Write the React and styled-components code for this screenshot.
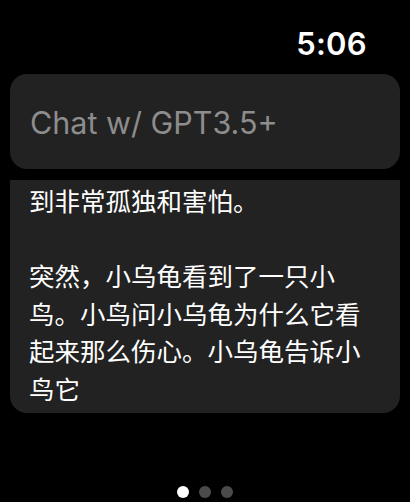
import React from "react";
import styled, { createGlobalStyle } from "styled-components";

const GlobalStyle = createGlobalStyle`
  html, body {
    margin: 0;
    padding: 0;
    background: #000;
  }
  body {
    font-family: Inter, "Noto Sans CJK SC", sans-serif;
  }
`;

const Screen = styled.div`
  width: 410px;
  height: 502px;
  background: #000;
  display: flex;
  flex-direction: column;
  overflow: hidden;
`;

const StatusBar = styled.div`
  height: 74px;
  display: flex;
  justify-content: flex-end;
  align-items: flex-start;
  padding-right: 43px;
  box-sizing: border-box;
`;

const Clock = styled.div`
  color: #fff;
  font-size: 31px;
  font-weight: 600;
  line-height: 30px;
  margin-top: 29px;
  letter-spacing: 0.3px;
`;

const InputCard = styled.div`
  margin: 0 10px;
  height: 95px;
  border-radius: 17px;
  background: #222222;
  display: flex;
  align-items: center;
  padding-left: 20px;
  box-sizing: border-box;
`;

const Placeholder = styled.span`
  color: #8d8d8d;
  font-size: 30.5px;
  font-weight: 400;
  margin-top: 1px;
`;

const Viewport = styled.div`
  margin-top: 11px;
  overflow: hidden;
`;

const MessageCard = styled.div`
  margin: 0 10px;
  background: #222222;
  border-radius: 0 0 17px 17px;
  padding: 1px 20px 7px 19px;
`;

const MessageText = styled.p`
  margin: 0;
  color: #fff;
  font-family: "Noto Sans CJK SC", sans-serif;
  font-size: 25.5px;
  line-height: 37.5px;
  white-space: pre-wrap;
`;

const Pager = styled.div`
  margin-top: auto;
  height: 16px;
  display: flex;
  justify-content: center;
  align-items: flex-start;
  gap: 10px;
`;

const Dot = styled.span`
  width: 12px;
  height: 12px;
  border-radius: 50%;
  background: ${(p) => (p.$active ? "#ffffff" : "#4b4b4b")};
`;

const lines = [
  "到非常孤独和害怕。",
  "",
  "突然，小乌龟看到了一只小",
  "鸟。小鸟问小乌龟为什么它看",
  "起来那么伤心。小乌龟告诉小",
  "鸟它",
];

export default function App() {
  return (
    <Screen>
      <GlobalStyle />
      <StatusBar>
        <Clock>5:06</Clock>
      </StatusBar>
      <InputCard>
        <Placeholder>Chat w/ GPT3.5+</Placeholder>
      </InputCard>
      <Viewport>
        <MessageCard>
          <MessageText>{lines.join("\n")}</MessageText>
        </MessageCard>
      </Viewport>
      <Pager>
        <Dot $active />
        <Dot />
        <Dot />
      </Pager>
    </Screen>
  );
}
